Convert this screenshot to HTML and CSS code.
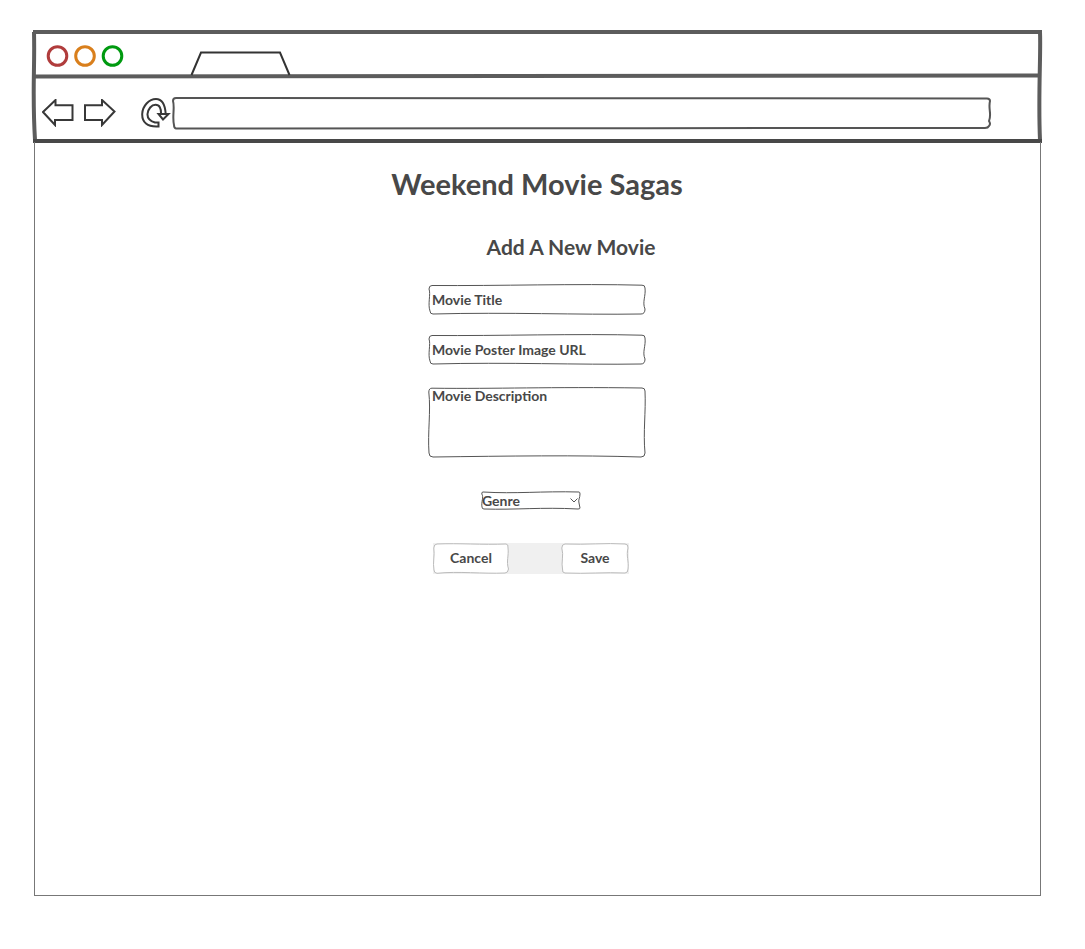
FILE: index.html
```html
<!DOCTYPE html>
<html lang="en">
<head>
<meta charset="utf-8">
<meta name="viewport" content="width=device-width, initial-scale=1">
<title>Weekend Movie Sagas</title>
<link rel="stylesheet" href="styles.css">
</head>
<body>
<div class="window">
  <header class="chrome">
    <svg class="sketch sketch-heavy" viewBox="0 0 1008 112" preserveAspectRatio="none" aria-hidden="true">
      <path d="M0 2H1008M1 2C2 40 -1 60 2 110M1006 2C1007 25 1004 65 1006 110M1 46.500L1005 45.500"/>
      <path class="base-line" d="M0 111L1008 111"/>
    </svg>
    <div class="chrome-rows">
      <div class="titlebar">
        <svg class="lights" viewBox="0 0 78 22" aria-hidden="true">
          <circle cx="11.500" cy="11" r="9.300" stroke="#b03c3c"/>
          <circle cx="39" cy="11" r="9.300" stroke="#d97f1c"/>
          <circle cx="66.500" cy="11" r="9.300" stroke="#009a10"/>
        </svg>
        <svg class="tab" viewBox="0 0 102 26" aria-hidden="true"><path d="M1.500 25L11 2.500H90L99.500 25"/></svg>
      </div>
      <div class="toolbar">
        <button class="nav-button" type="button" aria-label="Back">
          <svg class="arrow" viewBox="0 0 32 28" aria-hidden="true"><path d="M1 13L13.500 1V6.300H30.500V21H13V26Z"/></svg>
        </button>
        <button class="nav-button nav-forward" type="button" aria-label="Forward">
          <svg class="arrow" viewBox="0 0 32 28" aria-hidden="true"><path d="M1 6.300H18V1L30.500 12.500L18 26V21H1Z"/></svg>
        </button>
        <button class="nav-button nav-reload" type="button" aria-label="Reload">
          <svg class="reload" viewBox="0 0 30 30" aria-hidden="true"><path d="M17.500 28.500V24.500L14 24.500C9 23 6.300 20 6.500 16C7 11 10.500 6.800 14.500 6.800C18.500 6.800 20.200 10 20 16H17.500L22 21.500L27.500 16H24.700C24 5 20.500 1 15 1C8 1 1.500 8 1.200 16C1 24 6 29.300 17.500 28.500ZM17.500 16H27.500"/></svg>
        </button>
        <div class="field address">
          <svg class="sketch sketch-medium" viewBox="0 0 818 32" preserveAspectRatio="none" aria-hidden="true"><path d="M4 1C250 .5 500 2 814 1.500Q817 1.500 817 4C815 12 819 17 816 24Q818 27 816 29Q815 31 812 31C550 30.500 250 32 4 31.500Q2 31 2 28C0 20 3 10 1 4Q1 1 4 1Z"/></svg>
          <input class="control" type="text" aria-label="Address">
        </div>
      </div>
    </div>
  </header>
  <main class="page">
    <h1 class="site-title">Weekend Movie Sagas</h1>
    <h2 class="form-title">Add A New Movie</h2>
    <form class="movie-form">
      <div class="field text-field">
        <svg class="sketch" viewBox="0 0 218 31" preserveAspectRatio="none" aria-hidden="true"><path d="M4 1.500C70 2 150 -.5 214 1.200Q217 1 217 4C218 12 214 18 217 25Q217 30 213 30C150 31 80 28 5 30Q2 30 2 27C-.5 20 3 10 1 5Q1 1.500 4 1.500Z"/></svg>
        <input class="control" type="text" placeholder="Movie Title" aria-label="Movie Title">
      </div>
      <div class="field text-field">
        <svg class="sketch" viewBox="0 0 218 31" preserveAspectRatio="none" aria-hidden="true"><path d="M4 1.500C70 2 150 -.5 214 1.200Q217 1 217 4C218 12 214 18 217 25Q217 30 213 30C150 31 80 28 5 30Q2 30 2 27C-.5 20 3 10 1 5Q1 1.500 4 1.500Z"/></svg>
        <input class="control" type="url" placeholder="Movie Poster Image URL" aria-label="Movie Poster Image URL">
      </div>
      <div class="field area-field">
        <svg class="sketch" viewBox="0 0 218 71" preserveAspectRatio="none" aria-hidden="true"><path d="M4 1.200C70 2 120 -.3 214 1Q217 1 217 4C218 25 215 45 217 66Q217 70 213 70C150 68 80 69 5 70Q1 70 1 66C-.5 45 3 25 .8 5Q1 1 4 1.200Z"/></svg>
        <textarea class="control area" placeholder="Movie Description" aria-label="Movie Description"></textarea>
      </div>
      <div class="field select-field">
        <svg class="sketch" viewBox="0 0 100 19" preserveAspectRatio="none" aria-hidden="true"><path d="M2 1C35 3 60 0 98 1Q99 1 99 3C99 7 97 9 98 12L99 17Q99 18 97 18C60 16 35 19 3 18Q1 18 1 16C0 11 3 6 .8 3Q.5 1 2 1Z"/></svg>
        <select class="control genre" aria-label="Genre"><option>Genre</option></select>
        <svg class="chevron" viewBox="0 0 8 5" aria-hidden="true"><path d="M.5 .5L4 4L7.500 .5"/></svg>
      </div>
      <div class="actions">
        <div class="field action cancel">
          <svg class="sketch sketch-light" viewBox="0 0 76 31" preserveAspectRatio="none" aria-hidden="true"><path d="M4 1C25 0 50 2 73 1Q75.500 1 75 5C76 13 73 18 75.500 26Q75 30 72 30C50 31 25 28 4 30.300Q1 30 1 27C-.5 20 2 12 .8 5Q1 1 4 1Z"/></svg>
          <button class="control push" type="button">Cancel</button>
        </div>
        <div class="field action save">
          <svg class="sketch sketch-light" viewBox="0 0 68 31" preserveAspectRatio="none" aria-hidden="true"><path d="M4 1C25 2 45 -.3 64 1Q67.500 1 67 5C65 13 68 18 67 26Q67 30 64 30C45 29 25 31 4 30Q1 30 1.500 26C0 20 3 12 .8 5Q1 1 4 1Z"/></svg>
          <button class="control push" type="submit">Save</button>
        </div>
      </div>
    </form>
  </main>
</div>
</body>
</html>
```
FILE: styles.css
```css
* {
  box-sizing: border-box;
}

body {
  margin: 0;
  background: #fff;
  color: #484848;
  font-family: Lato, "Open Sans", sans-serif;
}

.window {
  display: flex;
  flex-direction: column;
  min-height: 100vh;
  padding: 30px 43px 53px 33px;
}

/* Hand-drawn outlines share a grid cell with the content they frame. */
.chrome,
.field {
  display: grid;
}

.chrome > *,
.field > * {
  grid-area: 1 / 1;
}

.chrome {
  height: 112px;
}

.sketch {
  width: 100%;
  height: 100%;
  overflow: visible;
  fill: #fff;
  stroke: #555;
  stroke-width: 1;
}

.sketch path {
  vector-effect: non-scaling-stroke;
}

.sketch-heavy {
  fill: none;
  stroke: #5c5c5c;
  stroke-width: 4;
}

.base-line {
  stroke: #484848;
}

.sketch-medium {
  stroke-width: 2;
}

.sketch-light {
  stroke: #bbb;
}

.chrome-rows {
  min-width: 0;
}

.titlebar {
  display: flex;
  align-items: flex-end;
  height: 46px;
  padding-left: 13px;
}

.lights {
  width: 78px;
  height: 22px;
  margin-bottom: 9px;
  fill: none;
  stroke-width: 3;
}

.tab {
  width: 102px;
  height: 26px;
  margin-left: 66px;
  fill: none;
  stroke: #333;
  stroke-width: 2;
}

.toolbar {
  display: flex;
  align-items: center;
  height: 66px;
  padding: 8px 51px 0 9px;
}

.nav-button {
  display: flex;
  padding: 0;
  border: 0;
  background: none;
}

.nav-button svg {
  fill: none;
  stroke: #383838;
  stroke-width: 2;
}

.arrow {
  width: 32px;
  height: 28px;
}

.reload {
  width: 30px;
  height: 30px;
}

.nav-forward {
  margin-left: 10px;
}

.nav-reload {
  margin-left: 25px;
}

.address {
  flex: 1;
  height: 32px;
  margin-left: 1px;
}

.page {
  display: flex;
  flex: 1;
  flex-direction: column;
  align-items: center;
  margin: 0 1px;
  padding: 22px 1px 0 0;
  border: 1px solid #777;
  border-top: 0;
}

.site-title {
  margin: 0;
  font-size: 29px;
  font-weight: 700;
  line-height: 40px;
}

.form-title {
  margin: 28px 0 0 68px;
  font-size: 21px;
  font-weight: 700;
  line-height: 30px;
}

.movie-form {
  display: flex;
  flex-direction: column;
  align-items: center;
  width: 218px;
  margin-top: 22px;
}

.control {
  width: 100%;
  min-width: 0;
  height: 100%;
  margin: 0;
  padding: 0 4px;
  border: 0;
  border-radius: 4px;
  background: transparent;
  color: inherit;
  font: 700 14px/18px Lato, "Open Sans", sans-serif;
}

.control::placeholder {
  color: inherit;
  opacity: 1;
}

.text-field {
  width: 100%;
  height: 31px;
  margin-bottom: 19px;
}

.area-field {
  width: 100%;
  height: 71px;
  margin: 3px 0 33px;
}

.area {
  resize: none;
  overflow: auto;
}

.select-field {
  width: 100px;
  height: 19px;
  margin-right: 12px;
}

.genre {
  padding: 0 16px 0 1px;
  appearance: none;
}

.chevron {
  place-self: center end;
  width: 8px;
  height: 5px;
  margin-right: 3px;
  fill: none;
  stroke: #555;
  pointer-events: none;
}

.actions {
  display: flex;
  justify-content: space-between;
  width: 196px;
  margin: 33px 12px 0 0;
  background: #f0f0f0;
}

.action {
  height: 31px;
}

.push {
  padding-bottom: 2px;
}

.cancel {
  width: 76px;
}

.save {
  width: 68px;
}
```
